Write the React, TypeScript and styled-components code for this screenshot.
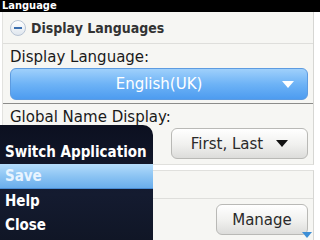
import React from 'react';
import styled, { createGlobalStyle } from 'styled-components';

const Global = createGlobalStyle`
    html, body {
        margin: 0;
        padding: 0;
        background: #ffffff;
    }
    body {
        font-family: "DejaVu Sans", "Liberation Sans", sans-serif;
    }
`;

const Screen = styled('div')`
    position: relative;
    width: 320px;
    height: 240px;
    overflow: hidden;
    background: #ffffff;
    display: flex;
    flex-direction: column;
`;

const TitleBar = styled('div')`
    height: 12px;
    line-height: 12px;
    background: #000000;
    color: #ffffff;
    font-family: "DejaVu Sans Condensed", "DejaVu Sans", sans-serif;
    font-stretch: condensed;
    font-size: 11px;
    font-weight: bold;
    padding-left: 2px;
`;

const Body = styled('div')`
    padding: 0 6px 0 2px;
    display: flex;
    flex-direction: column;
    gap: 5px;
    flex: 1;
`;

const Panel = styled('div')`
    background: #f6f6f3;
    border-left: 1px solid #e2e2df;
    border-right: 1px solid #d6d6d3;
    border-bottom: 1px solid #e0e0dd;
`;

const SectionHeader = styled('div')`
    height: 32px;
    box-sizing: border-box;
    display: flex;
    align-items: center;
    gap: 5px;
    padding: 1px 0 0 7px;
    border-bottom: 1px solid #dededb;
    font-family: "DejaVu Sans Condensed", "DejaVu Sans", sans-serif;
    font-stretch: condensed;
    font-size: 14px;
    font-weight: bold;
    color: #333333;
`;

const Collapse = styled('span')`
    width: 14px;
    height: 14px;
    border-radius: 50%;
    border: 1px solid #b8c4d4;
    background: linear-gradient(#ffffff, #dfe6ee);
    display: flex;
    align-items: center;
    justify-content: center;
    &::after {
        content: '';
        width: 8px;
        height: 2px;
        background: #3b6fb0;
    }
`;

const Field = styled('div')<{ $last?: boolean }>`
    padding: 4px 5px ${p => (p.$last ? 5 : 3)}px 7px;
    border-bottom: ${p => (p.$last ? 'none' : '1px solid #8c8c8a')};
`;

const Label = styled('div')`
    font-size: 15px;
    color: #1a1a1a;
    height: 18px;
    line-height: 18px;
    margin-bottom: 2px;
`;

const BlueSelect = styled('div')`
    position: relative;
    height: 32px;
    box-sizing: border-box;
    border-radius: 6px;
    border: 1px solid #5d9be0;
    background: linear-gradient(#9fd0fb, #6eb3f6 50%, #4d9cf0);
    color: #ffffff;
    font-size: 15px;
    display: flex;
    align-items: center;
    justify-content: center;
`;

const Arrow = styled('span')<{ $color: string }>`
    width: 0;
    height: 0;
    border-left: 6px solid transparent;
    border-right: 6px solid transparent;
    border-top: 7px solid ${p => p.$color};
`;

const SelectArrow = styled('span')`
    position: absolute;
    right: 13px;
    top: 12px;
    display: flex;
`;

const ButtonRow = styled('div')`
    display: flex;
    justify-content: flex-end;
`;

const GrayButton = styled('div')<{ $width: number }>`
    width: ${p => p.$width}px;
    height: 31px;
    box-sizing: border-box;
    border-radius: 6px;
    border: 1px solid #b9b9b6;
    background: linear-gradient(#ffffff, #f0f0ee 55%, #dcdcda);
    color: #2a2a2a;
    font-size: 15px;
    display: flex;
    align-items: center;
    justify-content: center;
    gap: 13px;
`;

const SecondPanel = styled('div')`
    background: #f6f6f3;
    border-top: 1px solid #e0e0dd;
    border-left: 1px solid #e2e2df;
    border-right: 1px solid #d6d6d3;
    flex: 1;
`;

const SubHeader = styled('div')`
    height: 27px;
    border-bottom: 1px solid #dededb;
`;

const ButtonArea = styled('div')`
    padding: 5px 5px 0 0;
`;

const Menu = styled('div')`
    position: absolute;
    left: 0;
    top: 125px;
    width: 153px;
    height: 115px;
    box-sizing: border-box;
    padding-top: 15px;
    background: linear-gradient(#0c1020, #141b30 60%, #101626);
    border-top-right-radius: 10px;
    display: flex;
    flex-direction: column;
`;

const MenuItem = styled('div')<{ $active?: boolean }>`
    height: 24px;
    line-height: 24px;
    padding-left: 5px;
    font-family: "DejaVu Sans Condensed", "DejaVu Sans", sans-serif;
    font-stretch: condensed;
    font-size: 15px;
    font-weight: bold;
    color: ${p => (p.$active ? '#e8f4ff' : '#ffffff')};
    background: ${p => (p.$active ? 'linear-gradient(#b4dcfb, #8cc4f3 50%, #6aaeec)' : 'transparent')};
    border-bottom: ${p => (p.$active ? '1px solid #4a8cd4' : 'none')};
    white-space: nowrap;
`;

const ScrollHint = styled('span')`
    position: absolute;
    right: 8px;
    bottom: 2px;
    width: 0;
    height: 0;
    border-left: 5px solid transparent;
    border-right: 5px solid transparent;
    border-top: 6px solid #3d8fd6;
`;

const menuItems = ['Switch Application', 'Save', 'Help', 'Close'];

export default function App() {
    return (
        <>
            <Global />
            <Screen>
                <TitleBar>Language</TitleBar>
                <Body>
                    <Panel>
                        <SectionHeader>
                            <Collapse />
                            Display Languages
                        </SectionHeader>
                        <Field>
                            <Label>Display Language:</Label>
                            <BlueSelect>
                                English(UK)
                                <SelectArrow>
                                    <Arrow $color="#ffffff" />
                                </SelectArrow>
                            </BlueSelect>
                        </Field>
                        <Field $last>
                            <Label>Global Name Display:</Label>
                            <ButtonRow>
                                <GrayButton $width={137}>
                                    First, Last
                                    <Arrow $color="#111111" />
                                </GrayButton>
                            </ButtonRow>
                        </Field>
                    </Panel>
                    <SecondPanel>
                        <SubHeader />
                        <ButtonArea>
                            <ButtonRow>
                                <GrayButton $width={92}>Manage</GrayButton>
                            </ButtonRow>
                        </ButtonArea>
                    </SecondPanel>
                </Body>
                <Menu>
                    {menuItems.map(item => (
                        <MenuItem key={item} $active={item === 'Save'}>
                            {item}
                        </MenuItem>
                    ))}
                </Menu>
                <ScrollHint />
            </Screen>
        </>
    );
}
